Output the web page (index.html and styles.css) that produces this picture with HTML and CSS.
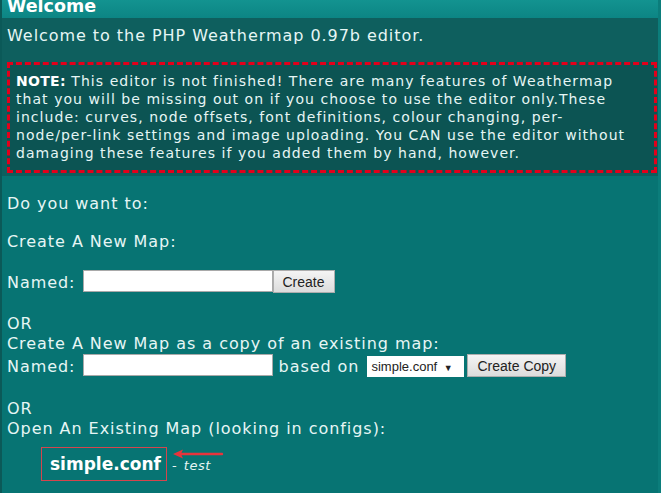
FILE: index.html
```html
<!DOCTYPE html>
<html lang="en">
<head>
    <meta charset="UTF-8">
    <title>PHP Weathermap Editor</title>
    <link rel="stylesheet" href="styles.css">
</head>
<body>

    <div class="page">
        <h2 class="heading">Welcome</h2>

        <!-- Intro panel -->
        <div class="intro">
            <p class="intro-text">Welcome to the PHP Weathermap 0.97b editor.</p>
            <div class="note">
                <b>NOTE:</b> This editor is not finished! There are many features of Weathermap<br>
                that you will be missing out on if you choose to use the editor only.These<br>
                include: curves, node offsets, font definitions, colour changing, per-<br>
                node/per-link settings and image uploading. You CAN use the editor without<br>
                damaging these features if you added them by hand, however.
            </div>
        </div>

        <!-- Choices -->
        <div class="choices">
            <p>Do you want to:</p>
            <p>Create A New Map:</p>
            <form class="row" onsubmit="return false;">
                Named: <input type="text" class="field"><button class="btn">Create</button>
            </form>
            <form class="copy" onsubmit="return false;">
                OR<br>
                Create A New Map as a copy of an existing map:<br>
                Named: <input type="text" class="field"> based on <span class="select">simple.conf <i>&#9660;</i></span><button class="btn">Create Copy</button>
            </form>
            <p class="open">OR<br>Open An Existing Map (looking in configs):</p>

            <ul class="maps">
                <li>
                    <a href="#" class="map-link">simple.conf</a>
                    <span class="map-title">- <em>test</em></span>
                    <svg class="arrow" width="52" height="12" viewBox="0 0 52 12">
                        <path d="M6 6 L50 6" stroke="#e8343c" stroke-width="2.4" stroke-linecap="round"/>
                        <path d="M1 6 L11 1.5 L9 6 L11 10.5 Z" fill="#e8343c"/>
                    </svg>
                </li>
            </ul>
        </div>
    </div>

</body>
</html>
```

FILE: styles.css
```css
/* Global Styles */
body {
    margin: 0;
    padding: 0;
    background: #077473;
    font-family: "DejaVu Sans", Verdana, sans-serif;
    color: #e6f6f5;
}

.page {
    border-left: 2px solid #0b5958;
    border-right: 3px solid #0b7d7b;
    min-height: 493px;
    box-sizing: border-box;
}

.heading {
    margin: 0;
    height: 18px;
    line-height: 12px;
    padding-left: 5px;
    font-size: 17.5px;
    font-weight: bold;
    color: #ffffff;
    background: linear-gradient(#139390, #0c8584);
    overflow: hidden;
    box-sizing: border-box;
}

/* Intro panel */
.intro {
    background: #0e5f5e;
    padding: 8px 1px 3px 5px;
}

.intro-text {
    margin: 0 0 16px 0;
    font-size: 16px;
    line-height: 20px;
    letter-spacing: 0.95px;
}

.note {
    border: 3px dashed #e3001b;
    background: #0c5453;
    padding: 7px 6px 8px 6px;
    font-size: 14px;
    line-height: 18px;
    letter-spacing: 1.05px;
    white-space: nowrap;
    color: #e6f6f5;
}

.note b {
    color: #ffffff;
    letter-spacing: 0.3px;
}

/* Choices */
.choices {
    padding: 18px 5px 0 5px;
    font-size: 16px;
    line-height: 20px;
    letter-spacing: 0.95px;
}

.choices p,
.choices form {
    margin: 0 0 18px 0;
}

.choices .row {
    margin: 17px 0 21px 0;
}

.choices .copy {
    margin-bottom: 22px;
}

.choices .open {
    margin-bottom: 8px;
}

.field {
    width: 190px;
    height: 22px;
    margin: 0 0 0 1px;
    padding: 0;
    vertical-align: 2px;
    border: 1px solid #a9a9a9;
    background: #fff;
    font-size: 13px;
    box-sizing: border-box;
}

.btn {
    height: 23px;
    padding: 0 9px;
    vertical-align: 1px;
    border: 1px solid #adadad;
    background: linear-gradient(#f4f4f4, #dcdcdc);
    font-family: "Liberation Sans", Arial, sans-serif;
    font-size: 14px;
    letter-spacing: 0;
    color: #222;
    box-sizing: border-box;
}

.select {
    display: inline-block;
    width: 97px;
    height: 21px;
    line-height: 21px;
    margin: 0 3px 0 2px;
    padding-left: 4px;
    vertical-align: 1px;
    background: #fff;
    font-family: "Liberation Sans", Arial, sans-serif;
    font-size: 13px;
    letter-spacing: 0;
    color: #222;
    box-sizing: border-box;
}

.select i {
    font-style: normal;
    font-size: 9px;
    margin-left: 3px;
}

/* Map list */
.maps {
    list-style: none;
    margin: 0;
    padding: 0 0 0 34px;
    letter-spacing: 0;
}

.maps li {
    position: relative;
}

.map-link {
    display: inline-block;
    padding: 5px 5px 5px 8px;
    border: 1px solid #d5454d;
    font-size: 17px;
    font-weight: bold;
    line-height: 22px;
    color: #ffffff;
    text-decoration: none;
}

.map-title {
    font-size: 13px;
    letter-spacing: 0.5px;
}

.map-title em {
    margin-left: 2px;
}

.arrow {
    position: absolute;
    left: 131px;
    top: 1px;
}
```
